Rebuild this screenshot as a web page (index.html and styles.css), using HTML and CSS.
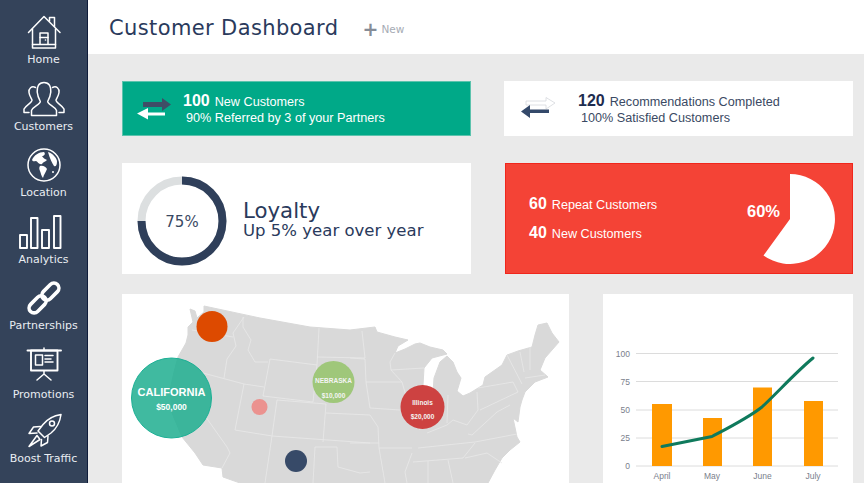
FILE: index.html
```html
<!DOCTYPE html>
<html lang="en">
<head>
<meta charset="utf-8">
<title>Customer Dashboard</title>
<link rel="stylesheet" href="styles.css">
</head>
<body>
<div class="app">
  <nav class="sidebar">
    <a class="nav-item">
      <svg class="nav-icon" viewBox="-8 0 52 36"><g class="ln">
        <path d="M2.5 18.5 18 2.5 34 18.5"/><path d="M23.5 7V3.5H28.5V12.5"/>
        <path d="M6.5 15V34H29.5V15"/><path d="M6.5 30.5H29.5"/><path d="M14 30V19H22V30"/><path d="M14 23.5H22"/>
      </g><circle class="fill" cx="19.5" cy="26" r=".8"/></svg>
      <span class="nav-label">Home</span>
    </a>
    <a class="nav-item">
      <svg class="nav-icon" viewBox="-8 0 52 36"><g class="ln">
        <path d="M18 1.5C12.5 1.5 10.8 6 11.2 11C11.5 15 13 18 14.3 20.5C14.3 23.5 7.5 25 5.5 29.5V34.5H30.5V29.5C28.5 25 21.7 23.5 21.7 20.5C23 18 24.5 15 24.8 11C25.2 6 23.5 1.5 18 1.5Z"/>
        <path d="M9.5 6.5C5.5 4.5 2.5 7.500 3 11.500C3.300 14.500 5 17 6 19C6 22 0 24 -2 28V31.500H3"/>
        <path d="M26.500 6.500C30.500 4.500 33.500 7.500 33 11.500C32.700 14.500 31 17 30 19C30 22 36 24 38 28V31.500H33"/>
      </g></svg>
      <span class="nav-label">Customers</span>
    </a>
    <a class="nav-item">
      <svg class="nav-icon" viewBox="-8 0 52 36"><circle class="ln" cx="18" cy="18" r="16"/>
        <path class="fill" d="M6 13C8 8 13 5 18 5C20 7 18 9 16 9C17 11 19 12 21 13C19 15 17 15 16 17C13 18 12 15 10 14C8 14 7 15 6 13Z"/>
        <path class="fill" d="M14 19C17 18 20 20 21 22C20 25 18 27 17 31C15 29 15 26 14 24C13 22 13 20 14 19Z"/>
        <path class="fill" d="M22 5C26 6 30 10 31 14C31 18 30 20 28 19C26 16 24 12 22 5Z"/>
        <circle class="fill" cx="27" cy="25" r="1"/></svg>
      <span class="nav-label">Location</span>
    </a>
    <a class="nav-item">
      <svg class="nav-icon" viewBox="-8 0 52 36"><g class="ln wide">
        <rect x="-6" y="21" width="7" height="13"/><rect x="5" y="4" width="6.500" height="30"/>
        <rect x="16" y="16" width="7" height="18"/><rect x="28" y="2" width="6.500" height="32"/>
      </g></svg>
      <span class="nav-label">Analytics</span>
    </a>
    <a class="nav-item">
      <svg class="nav-icon" viewBox="-8 0 52 36"><g class="ln link" transform="rotate(-45 18 18)">
        <rect x="-1" y="13" width="20" height="10" rx="5"/>
        <rect x="17" y="13" width="20" height="10" rx="5"/>
      </g></svg>
      <span class="nav-label">Partnerships</span>
    </a>
    <a class="nav-item nav-item-low">
      <svg class="nav-icon" viewBox="-8 0 52 36"><g class="ln">
        <path class="wide" d="M1.500 3.500H35"/><path d="M18 1V3"/>
        <rect class="wide" x="5" y="3.500" width="26.500" height="20"/>
        <rect x="9.500" y="8" width="7" height="10"/>
        <path d="M19 8.500H27M19 12H25M19 15H27"/>
        <path d="M18 24V27M18 27 11 33M18 27 25 33"/>
      </g></svg>
      <span class="nav-label">Promotions</span>
    </a>
    <a class="nav-item">
      <svg class="nav-icon" viewBox="-8 0 52 36"><g class="ln">
        <path d="M35 1.500C28 2.500 21.500 6 17 11.500L12 18L18.500 24.500L25 20C30.500 15.500 34 9 35 1.500Z"/>
        <path d="M14.500 13.500 7.500 14 3 20.500 11 20"/>
        <path d="M22 23 21.500 29.500 15 33 15.500 26.500"/>
        <path d="M11 22.500 3 33.500 14 26.500Z"/>
        <circle cx="26" cy="10.500" r="2.500"/>
      </g></svg>
      <span class="nav-label">Boost Traffic</span>
    </a>
  </nav>

  <main class="main">
    <header class="topbar">
      <h1 class="title">Customer Dashboard</h1>
      <span class="new"><span class="plus">+</span>New</span>
    </header>

    <div class="content">
      <section class="row row-stat">
        <article class="card card-green stat">
          <svg class="stat-icon" viewBox="0 0 36 24">
            <path class="arrow-dark" d="M6 5H25V1L34 7.500 25 14V10H6Z"/>
            <path class="arrow-white" d="M28 15.500H11V11L0 16.500 11 22.500V18.500H28Z"/>
          </svg>
          <div class="stat-text">
            <p class="stat-line"><b class="num">100</b><span class="lbl">New Customers</span></p>
            <p class="stat-sub">90% Referred by 3 of your Partners</p>
          </div>
        </article>
        <article class="card stat stat-white">
          <svg class="stat-icon" viewBox="0 0 36 24">
            <path class="arrow-ghost" d="M6 4H26V.5L35 6 26 12V8H6Z"/>
            <path class="arrow-navy" d="M29 12.500H10V8L1 14.500 10 21V16H29Z"/>
          </svg>
          <div class="stat-text">
            <p class="stat-line"><b class="num">120</b><span class="lbl">Recommendations Completed</span></p>
            <p class="stat-sub">100% Satisfied Customers</p>
          </div>
        </article>
      </section>

      <section class="row row-mid">
        <article class="card loyalty">
          <svg class="donut" viewBox="0 0 90 90">
            <circle class="donut-bg" cx="45" cy="45" r="40.500"/>
            <path class="donut-val" d="M45 4.500A40.500 40.500 0 1 1 4.500 45"/>
            <text class="donut-text" x="45" y="51" text-anchor="middle">75%</text>
          </svg>
          <div class="loyalty-text">
            <h2 class="loyalty-title">Loyalty</h2>
            <p class="loyalty-sub">Up 5% year over year</p>
          </div>
        </article>
        <article class="card card-red repeat">
          <div class="repeat-text">
            <p class="repeat-line"><b class="num">60</b><span class="lbl">Repeat Customers</span></p>
            <p class="repeat-line"><b class="num">40</b><span class="lbl">New Customers</span></p>
          </div>
          <svg class="pie" viewBox="0 0 90 90">
            <path class="pie-slice" d="M45 0A45 45 0 1 1 18.500 81.400L45 45Z"/>
            <text class="pie-text" x="2" y="43">60%</text>
          </svg>
        </article>
      </section>

      <section class="row row-low">
        <article class="card map-card">
          <svg class="map" viewBox="122 294 447 189">
            <path class="land" d="M204 306 260 318 310 327 350 330 375 327 377 332 395 337 408 340 398 346 395 353 405 349 415 344 420 343 430 347 443 350 447 354 432 358 424 368 423 385 433 393 434 378 440 362 447 356 453 362 457 372 461 378 458 388 457 391 463 396 470 393 483 385 485 377 502 365 507 355 518 351 532 347 535 335 538 325 547 323 552 333 559 342 545 358 540 370 548 377 535 382 525 392 522 400 520 407 518 422 513 418 517 437 520 442 510 450 502 458 495 470 488 483H240L223 477 222 468 203 465 195 453 182 437 172 413 170 390 174 372 178 357 186 343 188 335 188 327 193 322 190 309 195 311 197 318 204 312Z"/>
            <path class="border" d="M244 317 233 333 236 346 227 359 224 378M243 317 243 327 251 340 248 350 255 362 268 362M270 359 317 365 313 402 263 396ZM319 328 317 365M362 331 365 358 317 357M203 373 244 384 264 387M244 384 235 430 272 436 370 443M277 400 272 436 265 483M277 400 326 404 323 442M203 413 227 447 230 453 222 468M315 447 313 483M315 447 337 447 338 467 360 473 370 472M326 413 370 415M192 330 233 337M350 358 365 359M365 359 366 382 402 382M395 353 390 362 391 370 402 382M366 382 370 408 400 410M370 415 378 427 379 448 412 448M350 443 379 443M379 448 385 483M412 453 405 472 407 483M428 461V483M448 460 453 483M418 448 475 442 517 434M413 462 463 458 475 443M465 458 487 453 502 463M448 395 447 423M477 392 478 410M427 433 447 425 453 420 467 425 478 410M468 434 472 435 497 412 510 405M478 388 513 382 518 392 480 410M507 355 522 384M520 352 524 372M530 347 530 370M525 378 545 375M402 382 406 396 410 412 420 430M391 370 424 368"/>
            <circle class="dot-orange" cx="212" cy="326.500" r="15.500"/>
            <circle class="dot-teal" cx="171.500" cy="398" r="40"/>
            <text class="bub-lg" x="171.500" y="396" text-anchor="middle">CALIFORNIA</text>
            <text class="bub-md" x="171.500" y="410" text-anchor="middle">$50,000</text>
            <circle class="dot-pink" cx="259.500" cy="407" r="8"/>
            <circle class="dot-green" cx="333.500" cy="382" r="21"/>
            <text class="bub-sm" x="333.500" y="383" text-anchor="middle">NEBRASKA</text>
            <text class="bub-sm" x="333.500" y="398" text-anchor="middle">$10,000</text>
            <circle class="dot-red" cx="422.500" cy="407" r="22"/>
            <text class="bub-sm" x="422.500" y="405" text-anchor="middle">Illinois</text>
            <text class="bub-sm" x="422.500" y="419" text-anchor="middle">$20,000</text>
            <circle class="dot-navy" cx="296" cy="461" r="11"/>
          </svg>
        </article>
        <article class="card chart-card">
          <svg class="chart" viewBox="603 294 250 189">
            <path class="grid" d="M636 353.500H838M636 381.500H838M636 410H838M636 438H838M636 466H838"/>
            <g class="axis">
              <text x="630" y="357" text-anchor="end">100</text>
              <text x="630" y="385" text-anchor="end">75</text>
              <text x="630" y="413" text-anchor="end">50</text>
              <text x="630" y="441" text-anchor="end">25</text>
              <text x="630" y="469" text-anchor="end">0</text>
              <text x="662" y="479" text-anchor="middle">April</text>
              <text x="712" y="479" text-anchor="middle">May</text>
              <text x="762.500" y="479" text-anchor="middle">June</text>
              <text x="813" y="479" text-anchor="middle">July</text>
            </g>
            <rect class="bar" x="652" y="404" width="20" height="62"/>
            <rect class="bar" x="703" y="418" width="19" height="48"/>
            <rect class="bar" x="753" y="387.500" width="19" height="78.500"/>
            <rect class="bar" x="804" y="401" width="19" height="65"/>
            <path class="trend" d="M662 446.500 712 436.500C730 427 748 418 762 407 780 390 795 373 813 358"/>
          </svg>
        </article>
      </section>
    </div>
  </main>
</div>
</body>
</html>
```
FILE: styles.css
```css
* { box-sizing: border-box; }
html, body { margin: 0; height: 100%; overflow: hidden; }
body { font-family: "Liberation Sans", Arial, sans-serif; background: #eaeaea; }
p, h1, h2 { margin: 0; font-weight: normal; }

.app { display: flex; height: 483px; }

.sidebar {
  width: 88px;
  flex: none;
  background: #34435a;
  border-right: 1px solid #0f1c3a;
  padding-top: 14px;
  display: flex;
  flex-direction: column;
}
.nav-item {
  height: 66.5px;
  flex: none;
  display: flex;
  flex-direction: column;
  align-items: center;
}
.nav-icon { width: 52px; height: 36px; flex: none; }
.nav-label {
  font-family: "DejaVu Sans", Verdana, sans-serif;
  font-size: 11px;
  line-height: 14px;
  margin-top: 3px;
  color: #e9edf2;
  white-space: nowrap;
}
.nav-item-low .nav-label { margin-top: 5px; }
.ln { fill: none; stroke: #fff; stroke-width: 1.5; stroke-linejoin: round; stroke-linecap: round; }
.ln .wide, .wide { stroke-width: 1.9; }
.link { stroke-width: 3.6; }
.fill { fill: #fff; }

.main { flex: 1; min-width: 0; display: flex; flex-direction: column; }
.topbar {
  height: 54px;
  flex: none;
  background: #fff;
  display: flex;
  align-items: center;
  padding-left: 21px;
}
.title {
  font-family: "DejaVu Sans", Verdana, sans-serif;
  font-size: 21px;
  letter-spacing: .38px;
  color: #2a3a5c;
  margin-top: 1px;
}
.new {
  margin-left: 24px;
  font-family: "DejaVu Sans", Verdana, sans-serif;
  font-size: 10.5px;
  color: #a6abb4;
  display: flex;
  align-items: center;
  margin-top: 3px;
}
.plus { font-size: 19px; font-weight: bold; line-height: 14px; color: #868c97; margin-right: 3px; }

.content { padding: 27px 11px 0 34px; display: flex; flex-direction: column; }
.row { display: flex; justify-content: space-between; }
.row-stat { margin-bottom: 27px; }
.row-mid { margin-bottom: 20px; }

.card { background: #fff; }
.card-green { background: #00a988; color: #fff; border: 1px solid #5cc3ad; }
.card-red { background: #f44336; color: #fff; border: 1px solid #f0261c; }

.stat { width: 349px; height: 55px; display: flex; align-items: center; padding: 1px 0 0 14px; }
.stat-white { color: #3a4963; padding-left: 16px; }
.stat-white .stat-icon { margin-right: 22px; }
.stat-icon { width: 36px; height: 24px; flex: none; margin-right: 10px; }
.arrow-dark { fill: #3f4d66; }
.arrow-white { fill: #fff; }
.arrow-ghost { fill: #fff; stroke: #d5d8dd; stroke-width: .8; }
.arrow-navy { fill: #34496a; }
.stat-text { display: flex; flex-direction: column; gap: 1px; }
.stat-line { display: flex; align-items: baseline; height: 17px; line-height: 17px; }
.num { font-size: 16px; font-weight: bold; margin-right: 5px; }
.stat-white .num { color: #1d2c4f; }
.lbl { font-size: 12.65px; }
.stat-sub { font-size: 12.65px; line-height: 16px; margin-left: 3px; }

.loyalty, .repeat { width: 349px; height: 111px; display: flex; align-items: center; }
.loyalty { padding-left: 15px; }
.donut { width: 90px; height: 90px; flex: none; margin: 5px 16px 0 0; }
.donut-bg { fill: none; stroke: #dcdfe0; stroke-width: 8; }
.donut-val { fill: none; stroke: #2f3f5a; stroke-width: 8; }
.donut-text { font-family: "DejaVu Sans", Verdana, sans-serif; font-size: 15px; fill: #3a4963; }
.loyalty-text { color: #2a3a5c; margin-top: 1px; }
.loyalty-title { font-family: "DejaVu Sans", Verdana, sans-serif; font-size: 21.3px; line-height: 22px; }
.loyalty-sub { font-family: "DejaVu Sans", Verdana, sans-serif; font-size: 16.55px; line-height: 17px; }

.repeat { justify-content: space-between; padding: 0 17px 0 23px; margin-left: 1px; width: 348px; }
.repeat-text { display: flex; flex-direction: column; gap: 11px; margin-top: 0; }
.repeat-line { display: flex; align-items: baseline; height: 18px; line-height: 18px; }
.pie { width: 90px; height: 90px; flex: none; }
.pie-slice { fill: #fff; }
.pie-text { font-size: 16.500px; font-weight: bold; fill: #fff; }

.row-low { align-items: flex-start; }
.map-card { width: 447px; height: 189px; }
.chart-card { width: 250px; height: 189px; }
.map, .chart { display: block; width: 100%; height: 100%; }

.land { fill: #d9d9d9; stroke: #d9d9d9; stroke-width: 1; stroke-linejoin: round; }
.border { fill: none; stroke: #e9e9e9; stroke-width: .8; stroke-linejoin: round; }
.dot-orange { fill: #dd4a00; }
.dot-teal { fill: #1fae8f; fill-opacity: .85; stroke: #1bb095; }
.dot-pink { fill: #ef7f7c; fill-opacity: .8; }
.dot-green { fill: #9fc77a; }
.dot-red { fill: #cc3b3a; fill-opacity: .96; }
.dot-navy { fill: #374a68; }
.bub-lg { font-size: 11px; font-weight: bold; fill: #fff; }
.bub-md { font-size: 8.500px; font-weight: bold; fill: #fff; }
.bub-sm { font-size: 6.500px; font-weight: bold; fill: #f4f4f4; }

.grid { fill: none; stroke: #dcdcdc; stroke-width: 1; }
.axis text { font-size: 8.500px; fill: #7a808c; }
.bar { fill: #ff9900; }
.trend { fill: none; stroke: #0f7a5c; stroke-width: 3; stroke-linecap: round; stroke-linejoin: round; }
```
